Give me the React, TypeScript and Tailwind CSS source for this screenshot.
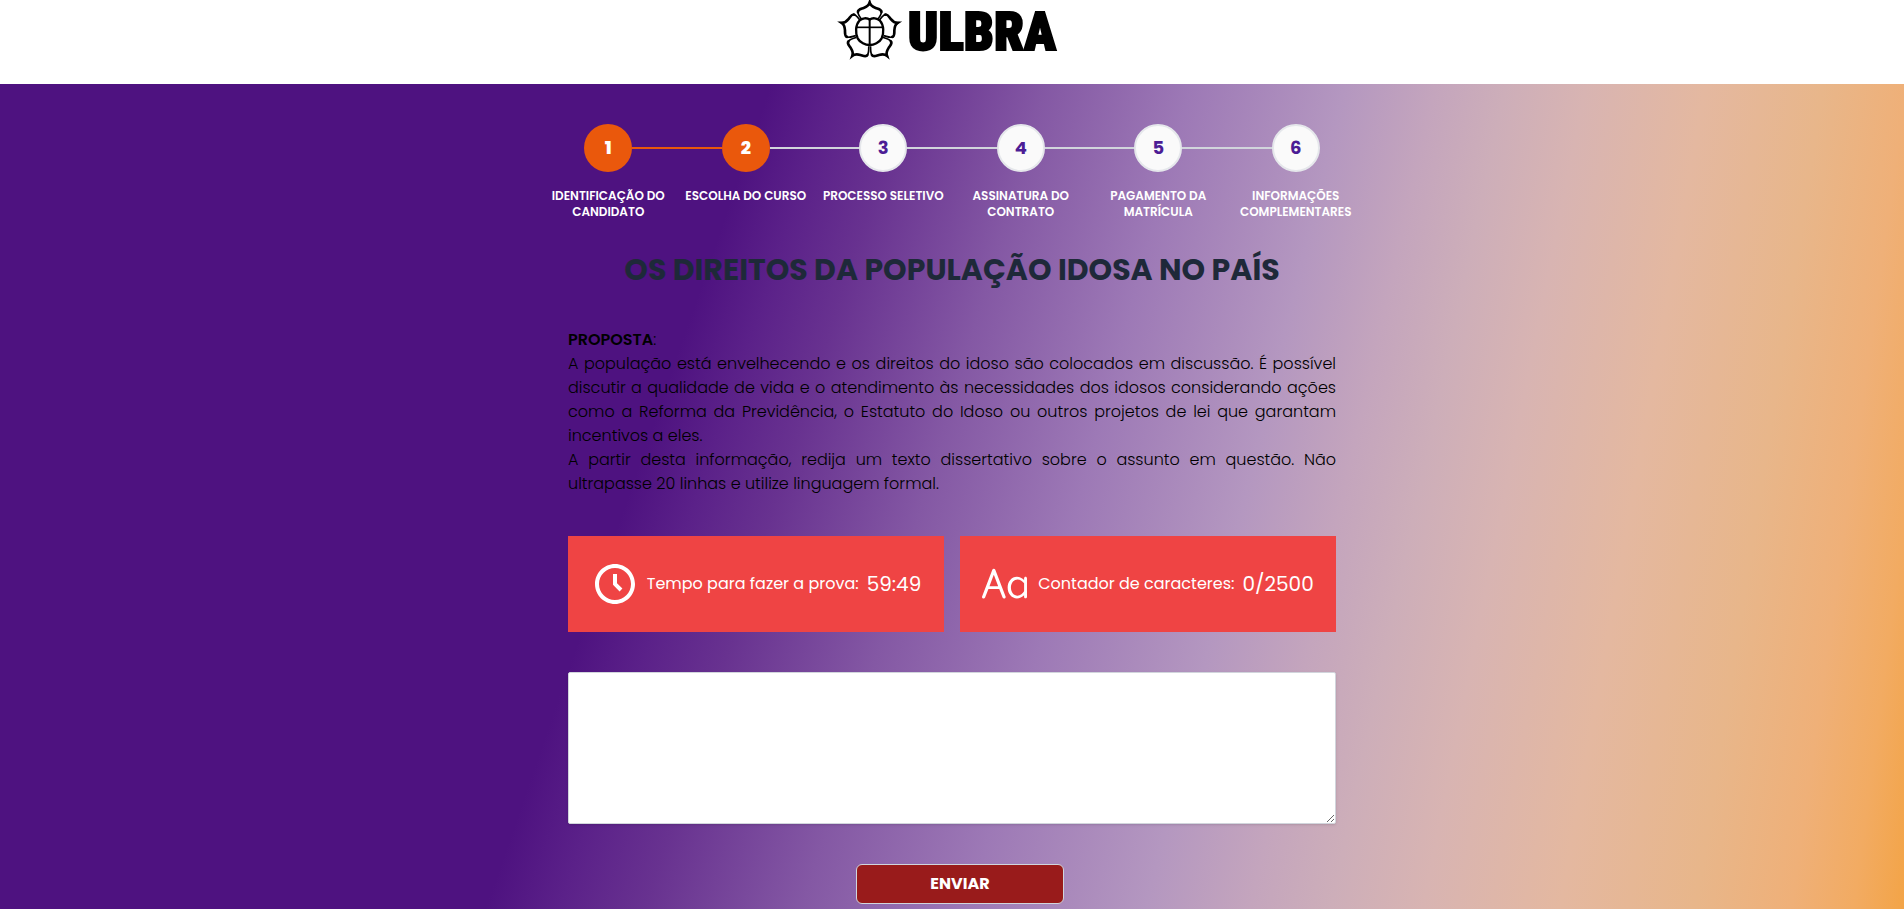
import { useState } from "react";
import { BiTimeFive } from "react-icons/bi";
import { RxLetterCaseCapitalize } from "react-icons/rx";

const steps = [
  { title: "IDENTIFICAÇÃO DO CANDIDATO", done: true },
  { title: "ESCOLHA DO CURSO", done: true },
  { title: "PROCESSO SELETIVO", done: false },
  { title: "ASSINATURA DO CONTRATO", done: false },
  { title: "PAGAMENTO DA MATRÍCULA", done: false },
  { title: "INFORMAÇÕES COMPLEMENTARES", done: false },
];

const proposal = [
  "A população está envelhecendo e os direitos do idoso são colocados em discussão. É possível discutir a qualidade de vida e o atendimento às necessidades dos idosos considerando ações como a Reforma da Previdência, o Estatuto do Idoso ou outros projetos de lei que garantam incentivos a eles.",
  "A partir desta informação, redija um texto dissertativo sobre o assunto em questão. Não ultrapasse 20 linhas e utilize linguagem formal.",
];

function Emblem() {
  return (
    <svg viewBox="0 0 204 180" className="h-[60px] w-[68px]" fill="none" stroke="#000" aria-hidden="true">
      {[0, 72, 144, 216, 288].map((angle) => (
        <g key={angle} transform={`rotate(${angle} 101 96)`}>
          <path d="M78 60 C72 50 63 42 66 32" strokeWidth="5" />
          <path d="M124 60 C130 50 139 42 136 32" strokeWidth="5" />
          <path
            d="M66 36 C65 28 75 27 83 24 C93 20 99 15 101 8 C103 15 109 20 119 24 C127 27 137 28 136 36"
            strokeWidth="8"
            strokeLinecap="round"
          />
          <path d="M96 14 L101 1 L106 14 Z" fill="#000" strokeWidth="1" />
        </g>
      ))}
      <path
        d="M101 59 C93 52 78 54 70 62 C58 75 58 100 65 115 C72 128 88 135 101 135 C114 135 130 128 137 115 C144 100 144 75 132 62 C124 54 109 52 101 59 Z"
        fill="#fff"
        strokeWidth="7"
      />
      <path d="M101 58 V135" strokeWidth="6" />
      <path d="M62 82 H140" strokeWidth="5" />
    </svg>
  );
}

export default function App() {
  const [essay, setEssay] = useState("");

  return (
    <div className="flex min-h-screen flex-col bg-white font-['Poppins','Inter',sans-serif]">
      <header className="flex h-[84px] items-start justify-center">
        <a href="#" aria-label="ULBRA" className="mr-3 flex items-start gap-1 text-black">
          <Emblem />
          <span className="pt-0.5 font-['Roboto_Condensed','Open_Sans_Condensed','Oswald','Anton','Lato',sans-serif] text-[53px] leading-[60px] font-black [-webkit-text-stroke:2px_#000]">
            ULBRA
          </span>
        </a>
      </header>

      <main className="flex flex-1 flex-col items-center bg-[conic-gradient(from_180deg_at_140.5%_-5500px,#f3a447_6.95deg,#f2ab62_7.4deg,#efb078_7.96deg,#e8b68a_8.8deg,#e4b8a0_10deg,#d8b4b2_11.2deg,#cdaeb9_12deg,#c4a5bd_12.7deg,#b497c0_13.6deg,#9d79b6_15.1deg,#8458a4_16.5deg,#683290_17.8deg,#5b2189_18.5deg,#4e1280_19.1deg)] pt-10 pb-[5px]">
        <ol className="grid w-full max-w-[825px] grid-cols-6">
          {steps.map((step, i) => (
            <li key={step.title} className="flex flex-col items-center">
              <div className="flex w-full items-center">
                <span
                  className={
                    i === 0 ? "h-0.5 flex-1" : step.done ? "h-0.5 flex-1 bg-[#ea580c]" : "h-0.5 flex-1 bg-gray-300"
                  }
                />
                <span
                  className={
                    step.done
                      ? "flex size-12 items-center justify-center rounded-full bg-[#ea580c] text-lg font-extrabold text-white"
                      : "flex size-12 items-center justify-center rounded-full border-2 border-gray-200 bg-neutral-50 text-lg font-bold text-[#4c1d95]"
                  }
                >
                  {i + 1}
                </span>
                <span
                  className={
                    i === steps.length - 1
                      ? "h-0.5 flex-1"
                      : steps[i + 1].done
                        ? "h-0.5 flex-1 bg-[#ea580c]"
                        : "h-0.5 flex-1 bg-gray-300"
                  }
                />
              </div>
              <span className="mt-4 w-32 text-center text-xs leading-4 font-semibold text-white">{step.title}</span>
            </li>
          ))}
        </ol>

        <form className="flex w-full max-w-3xl flex-col" onSubmit={(e) => e.preventDefault()}>
          <h1 className="mt-8 text-center text-3xl leading-9 font-bold text-gray-800">
            OS DIREITOS DA POPULAÇÃO IDOSA NO PAÍS
          </h1>

          <div className="mt-10 text-justify text-base leading-6 font-light text-black">
            <p>
              <strong className="font-semibold">PROPOSTA</strong>:
            </p>
            {proposal.map((paragraph) => (
              <p key={paragraph}>{paragraph}</p>
            ))}
          </div>

          <div className="mt-10 grid grid-cols-2 gap-4 text-white">
            <div className="flex h-24 items-center justify-center gap-2 bg-[#ef4444]">
              <BiTimeFive className="size-12" />
              <span className="text-base">Tempo para fazer a prova:</span>
              <span className="text-xl">59:49</span>
            </div>
            <div className="flex h-24 items-center justify-center gap-2 bg-[#ef4444]">
              <RxLetterCaseCapitalize className="size-12" />
              <span className="text-base">Contador de caracteres:</span>
              <span className="text-xl">{essay.length}/2500</span>
            </div>
          </div>

          <textarea
            aria-label="Texto da redação"
            maxLength={2500}
            value={essay}
            onChange={(e) => setEssay(e.target.value)}
            className="mt-10 h-[152px] w-full rounded-xs border border-gray-300 bg-white p-2 text-base text-black shadow-sm"
          />

          <button
            type="submit"
            className="mt-10 ml-4 h-10 w-52 self-center rounded-md border border-gray-300 bg-[#991b1b] text-base font-bold text-white"
          >
            ENVIAR
          </button>
        </form>
      </main>
    </div>
  );
}
